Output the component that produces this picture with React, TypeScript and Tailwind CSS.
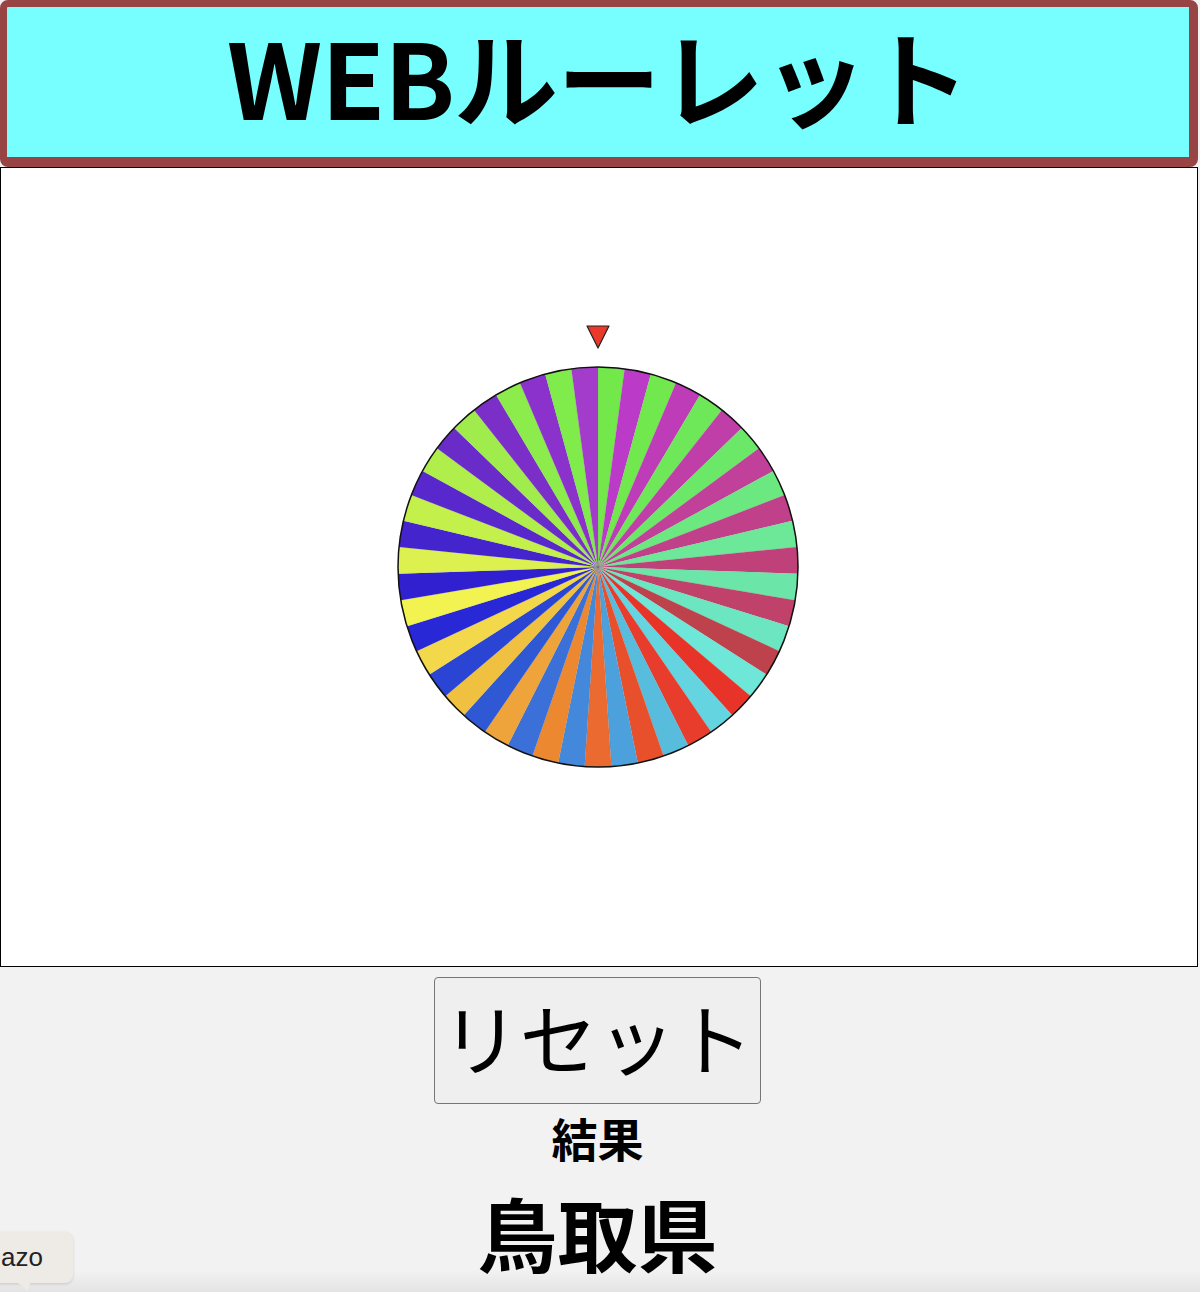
import React from 'react';

const COLORS = [
  '#72e84a', '#bb3bc8', '#70e84e', '#be3cb8', '#6ee858', '#c03ea8', '#6ce868', '#c0409a',
  '#6ce880', '#c0408a', '#6ce898', '#c0407a', '#6ce6a8', '#c0426a', '#6ce6c0', '#bd424c',
  '#6ee6d8', '#e83428', '#64d4e0', '#e83c2c', '#58bcdc', '#e8502c', '#4ca0dc', '#ea6a30',
  '#4488dc', '#ec8830', '#3a70d8', '#eea43a', '#2e58d4', '#f0c040', '#2a44d4', '#f2d84a',
  '#2828d6', '#f2f250', '#3020d0', '#dcf050', '#4424cc', '#c4f04c', '#5828cc', '#b0ee4c',
  '#6a2cc8', '#a0ec4c', '#7c2ec8', '#8cec4c', '#8c32cc', '#80ec4c', '#a43ccb',
];

const CX = 597;
const CY = 399;
const R = 200;

const point = (a: number) => [CX + R * Math.sin(a), CY - R * Math.cos(a)];

const Wheel: React.FC = () => {
  const n = COLORS.length;
  const step = (Math.PI * 2) / n;
  return (
    <svg width="1196" height="798" viewBox="0 0 1196 798">
      {COLORS.map((c, i) => {
        const [x0, y0] = point(i * step);
        const [x1, y1] = point((i + 1) * step);
        return (
          <path
            key={i}
            d={`M${CX} ${CY} L${x0} ${y0} A${R} ${R} 0 0 1 ${x1} ${y1} Z`}
            fill={c}
            stroke="rgba(120,120,120,0.25)"
            strokeWidth="0.4"
          />
        );
      })}
      <circle cx={CX} cy={CY} r={R} fill="none" stroke="#111" strokeWidth="1.5" />
      <polygon points="586,158 608,158 597,180" fill="#e8392a" stroke="#222" strokeWidth="1.2" strokeLinejoin="round" />
    </svg>
  );
};

export default function App() {
  return (
    <div
      className="relative min-h-screen overflow-hidden bg-[#f2f2f2]"
      style={{ fontFamily: '"Noto Sans CJK JP", "Noto Sans", sans-serif' }}
    >
      <div className="w-[1198px]">
        <div className="flex h-[167px] items-center justify-center rounded-[8px] border-t-[7px] border-l-[7px] border-r-[9px] border-b-[10px] border-[#994444] bg-[#77ffff] pb-[14px]">
          <h1 className="text-[104px] font-bold leading-none tracking-[-1px] text-black">WEBルーレット</h1>
        </div>
        <div className="h-[800px] w-[1198px] border border-black bg-white">
          <Wheel />
        </div>
        <div className="flex flex-col items-center pr-[3px]">
          <button className="mt-[10px] flex h-[127px] w-[327px] items-center justify-center rounded-[4px] border border-[#767676] bg-[#efefef] pb-[10px] text-[78px] font-normal leading-none text-black">
            リセット
          </button>
          <div className="mt-[3px] text-[46px] font-bold leading-[60px] text-black">結果</div>
          <div className="mt-[16px] text-[80px] font-bold leading-[96px] text-black">鳥取県</div>
        </div>
      </div>

      <div className="pointer-events-none absolute bottom-0 left-0 h-[22px] w-full bg-gradient-to-b from-transparent to-black/[0.06]" />

      <div className="absolute left-[-20px] top-[1232px] flex h-[51px] w-[93px] items-center rounded-[8px] bg-[#eeebe7] pl-[21px] shadow-[0_1px_3px_rgba(0,0,0,0.15)]">
        <span className="text-[26px] text-[#222]" style={{ fontFamily: '"Liberation Sans", Arial, sans-serif' }}>azo</span>
        <div className="absolute bottom-[-8px] left-[38px] h-0 w-0 border-l-[10px] border-r-[2px] border-t-[8px] border-l-transparent border-r-transparent border-t-[#eeebe7]" />
      </div>
    </div>
  );
}
